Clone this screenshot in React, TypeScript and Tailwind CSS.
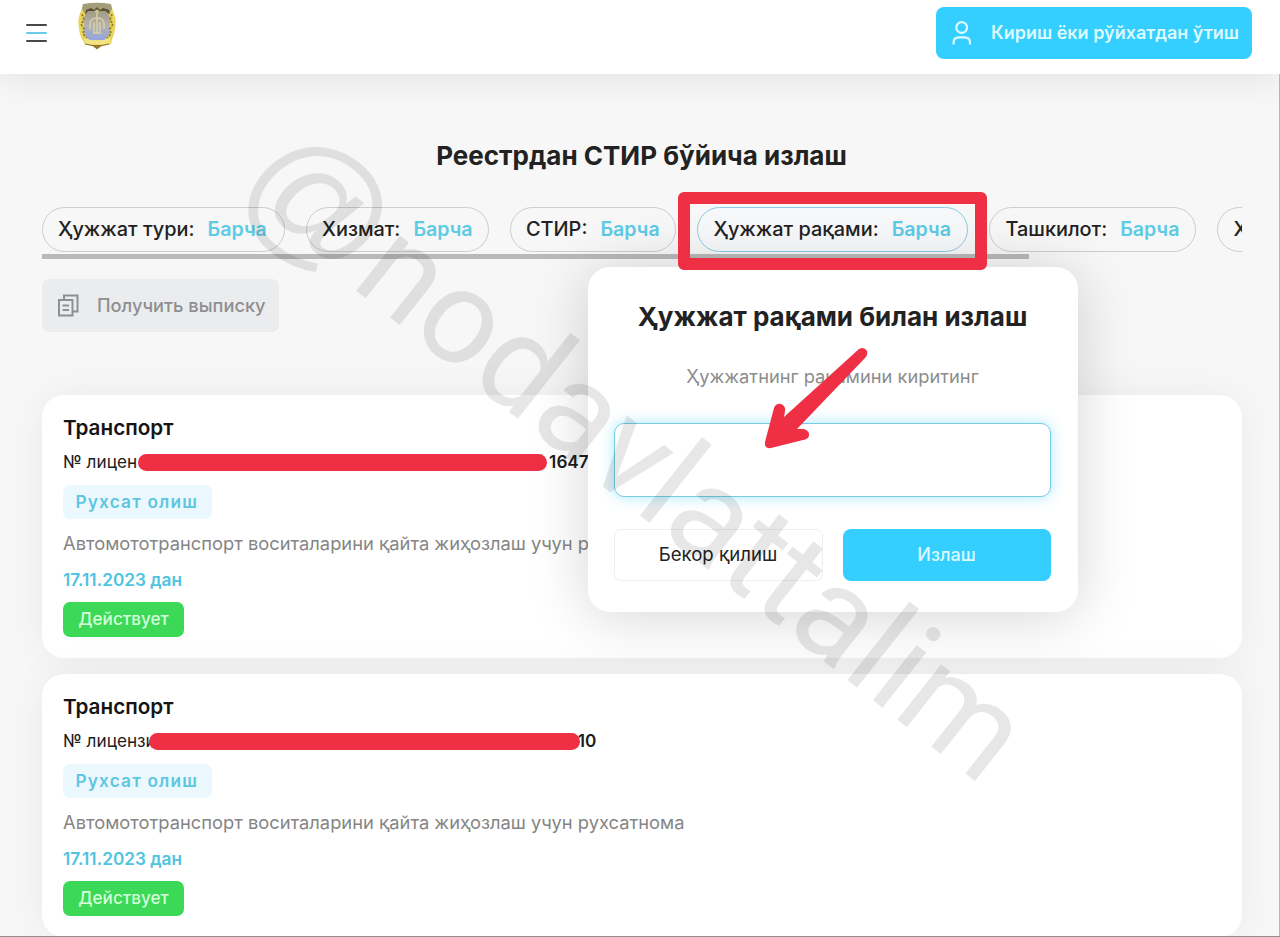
import type { ReactNode } from "react";

function Emblem() {
  return (
    <svg width="42" height="48" viewBox="0 0 42 48">
      <defs>
        <linearGradient id="shield" x1="0" y1="0" x2="0" y2="1">
          <stop offset="0" stopColor="#a09b86" />
          <stop offset="0.5" stopColor="#b3b2ad" />
          <stop offset="1" stopColor="#94a4e2" />
        </linearGradient>
      </defs>
      <path d="M7 3 Q21 0 35 3 L37 9 Q41 17 39 27 Q38 34 36 37 L35 42 L26 44 L21 47 L16 44 L9 42 L6 37 Q4 34 3 27 Q1 17 5 9 Z" fill="#e8d55c" />
      <path d="M7 2 Q21 -0.5 35 2 L36 7 L33 12 L9 12 L6 7 Z" fill="#a39d7c" />
      <path d="M10 8 L15 6 L18 8 L21 5 L24 8 L27 6 L33 8 L34 12 L30 10 L12 10 L9 13 Z" fill="#5a5030" />
      <path d="M12 9 L30 9 L34 15 L34 31 L29 38 L13 38 L8 31 L8 15 Z" fill="url(#shield)" />
      <path d="M6 12 L8 18 L5 22 L8 27 L7 32 L11 36 M36 12 L34 18 L37 22 L34 27 L35 32 L31 36" fill="none" stroke="#8f7a28" strokeWidth="1.7" strokeDasharray="2.4 1.4" />
      <path d="M21 10 V31 M14 27 V21 Q15 16 21 16 Q27 16 28 21 V27 M18 20 V30 M24 20 V30 M17 31 H25" fill="none" stroke="#dcd1a6" strokeWidth="1.4" />
      <circle cx="21" cy="9.5" r="2" fill="#cfc28a" />
      <path d="M8 36 Q21 41 34 36 L34 41 Q21 44 9 41 Z" fill="#f2e386" />
      <path d="M9 42 L16 43.5 M33 42 L26 43.5 M17 43.5 L21 46.5 L25 43.5 Z" stroke="#8d7634" strokeWidth="1.2" fill="#a08038" />
    </svg>
  );
}

function Header() {
  return (
    <header className="relative flex h-[74px] items-start bg-white pl-[26px] pr-7 shadow-[0_4px_36px_rgba(0,0,0,0.09)]">
      <button aria-label="menu" className="mt-[23.5px] flex w-[21px] flex-col gap-[5.5px]">
        <span className="h-[2.5px] rounded-full bg-[#484848]" />
        <span className="h-[2.5px] rounded-full bg-[#65cde9]" />
        <span className="h-[2.5px] rounded-full bg-[#484848]" />
      </button>
      <div className="ml-[29px] mt-[2px]">
        <Emblem />
      </div>
      <button className="ml-auto mt-[7px] flex h-[52px] w-[316px] items-center rounded-[8px] bg-[#34ceff] pb-px pl-[16px] text-[18px] font-semibold whitespace-nowrap text-[#dcfbff]">
        <svg width="20" height="25" viewBox="0 0 20 25" fill="none" stroke="currentColor" strokeWidth="2.2">
          <circle cx="9.7" cy="7.5" r="5.4" />
          <path d="M1.6 24.5 V22.5 Q1.6 17.3 7 17.3 H12.5 Q18 17.3 18 22.5 V24.5" />
        </svg>
        <span className="ml-[19px]">Кириш ёки рўйхатдан ўтиш</span>
      </button>
    </header>
  );
}

function Chip({ label, width, active = false, value = true }: { label: string; width: string; active?: boolean; value?: boolean }) {
  return (
    <div
      className={`flex h-[45px] shrink-0 items-center rounded-full border pt-[2px] pl-[15.5px] text-[19.9px] font-medium whitespace-nowrap ${width} ${
        active ? "border-[#8bcbe3] bg-[#f7f8fa]" : "border-[#cdcdcd]"
      }`}
    >
      <span className="text-[#222]">{label}</span>
      {value && <span className="ml-[13px] text-[19.6px] font-semibold text-[#5dcbe6]">Барча</span>}
    </div>
  );
}

function LicenseCard({ number }: { number: ReactNode }) {
  return (
    <article className="h-[263px] shrink-0 rounded-[22px] bg-white pl-[21.5px] pt-[20px] whitespace-nowrap shadow-[0_0_40px_rgba(0,0,0,0.055)]">
      <h2 className="h-[26px] text-[20.7px] leading-[26px] font-semibold text-[#151515]">Транспорт</h2>
      <div className="mt-[9px] flex h-6 items-center text-[17.2px] text-[#1d1d1d]">{number}</div>
      <div className="mt-[11px] flex h-[34px] w-[149px] items-center rounded-[7px] bg-[#ebf9ff] pb-px pl-[12.5px] text-[17.3px] font-semibold tracking-[1.15px] text-[#5fc6df]">
        Рухсат олиш
      </div>
      <p className="mt-[12px] h-6 text-[18.32px] leading-6 text-[#858585]">Автомототранспорт воситаларини қайта жиҳозлаш учун рухсатнома</p>
      <p className="mt-[13px] h-6 text-[17.25px] leading-6 font-semibold text-[#4fc3e2]">17.11.2023 дан</p>
      <div className="mt-[10px] flex h-[35px] w-[121px] items-center justify-center rounded-[7px] bg-[#3bd957] pb-px text-[17.1px] font-medium text-[#d5ffd9]">
        Действует
      </div>
    </article>
  );
}

function SearchPopup() {
  return (
    <section className="absolute left-[587.5px] top-[267px] flex h-[345px] w-[490px] flex-col rounded-[22px] bg-white px-[26px] pt-[34px] shadow-[0_4px_60px_rgba(0,0,0,0.17)]">
      <h3 className="text-center text-[26px] leading-8 font-bold whitespace-nowrap text-[#222]">Ҳужжат рақами билан излаш</h3>
      <p className="mt-[31px] text-center text-[18.3px] leading-6 whitespace-nowrap text-[#8c8c8c]">Ҳужжатнинг рақамини киритинг</p>
      <input className="mt-[35px] h-[74px] w-[437.5px] rounded-[10px] border-[1.5px] border-[#75cde0] bg-white shadow-[0_0_14px_rgba(52,206,255,0.42)] outline-none" />
      <div className="mt-[32px] flex gap-5 text-[18.6px]">
        <button className="h-[52px] w-[209px] rounded-[7px] border border-[#f0f0f0] pb-px text-[#222]">Бекор қилиш</button>
        <button className="h-[52px] w-[208px] rounded-[8px] bg-[#34ceff] pb-px text-[18px] font-medium text-[#dcfbff]">Излаш</button>
      </div>
    </section>
  );
}

function Watermark() {
  return (
    <svg className="pointer-events-none absolute left-0 top-0" width="1280" height="937">
      <g transform="translate(349 285) rotate(38.4)" fill="#000" opacity="0.09">
        <text x="-1" y="3" textAnchor="end" fontSize="145" fontFamily="Liberation Sans">@</text>
        <text fontSize="133.4" fontFamily="Roboto">nodavlattalim</text>
      </g>
    </svg>
  );
}

export default function App() {
  return (
    <div className="relative flex h-[937px] w-[1280px] flex-col overflow-hidden bg-[#f7f7f7] font-['Inter',sans-serif]">
      <Header />
      <main className="flex flex-col pl-[41.5px] pr-[38.5px]">
        <h1 className="mt-[66px] text-center text-[26px] leading-8 font-bold text-[#222]">Реестрдан СТИР бўйича излаш</h1>
        <nav className="mt-[34.5px] flex h-[53px] flex-col overflow-hidden">
          <div className="flex gap-[21px]">
            <Chip label="Ҳужжат тури:" width="w-[243px]" />
            <Chip label="Хизмат:" width="w-[183px]" />
            <Chip label="СТИР:" width="w-[166.5px]" />
            <Chip label="Ҳужжат рақами:" width="w-[271px]" active />
            <Chip label="Ташкилот:" width="w-[207px]" />
            <Chip label="Х" width="w-[100px]" value={false} />
          </div>
          <div className="mt-[2px] h-[5px] w-[987px] shrink-0 bg-[#b9b9b9]" />
        </nav>
        <button className="mt-[19.5px] flex h-[53px] w-[237px] items-center rounded-[7px] bg-[#ebeced] pl-[16px] text-[18.25px] font-medium whitespace-nowrap text-[#8d8f91]">
          <svg width="21" height="23" viewBox="0 0 21 23" fill="none" stroke="currentColor" strokeWidth="2">
            <path d="M1 6 H14.5 V21.5 H1 Z" />
            <path d="M6 6 V1.5 H19.5 V17.5 H15" />
            <path d="M4.5 11.5 H11 M4.5 16 H11" strokeWidth="1.8" />
          </svg>
          <span className="ml-[18.5px]">Получить выписку</span>
        </button>
        <div className="mt-[63px] flex flex-col gap-[16px]">
          <LicenseCard
            number={
              <>
                <span>№ лицен</span>
                <span className="ml-px h-[17px] w-[409px] rounded-full bg-[#ef2f43]" />
                <span className="ml-[2px] font-semibold">1647</span>
              </>
            }
          />
          <LicenseCard
            number={
              <>
                <span>№ лицензи</span>
                <span className="z-10 -ml-[7px] h-[17px] w-[431px] rounded-full bg-[#ef2f43]" />
                <span className="-ml-[2px] font-semibold">10</span>
              </>
            }
          />
        </div>
      </main>

      <SearchPopup />
      <Watermark />

      <div className="absolute left-[678px] top-[192px] z-20 h-[78px] w-[309px] rounded-[6px] border-[12px] border-[#ef2f43]" />
      <svg className="absolute left-[755px] top-[340px]" width="125" height="120" viewBox="755 340 125 120">
        <path
          d="M859 349 Q864 346 867 351 Q868 355 865 358 L797 429 L804 429 Q810 431 809 436 Q808 439 803 440 L771 448 Q764 449 765 442 L774 408 Q776 403 781 404 Q786 406 785 411 L784 417 Z"
          fill="#ef2f43"
        />
      </svg>
      <div className="absolute right-0 top-[74px] h-[863px] w-px bg-[#b5b5b5]" />
      <div className="absolute bottom-0 left-0 h-px w-full bg-[#8f8f8f]" />
    </div>
  );
}
